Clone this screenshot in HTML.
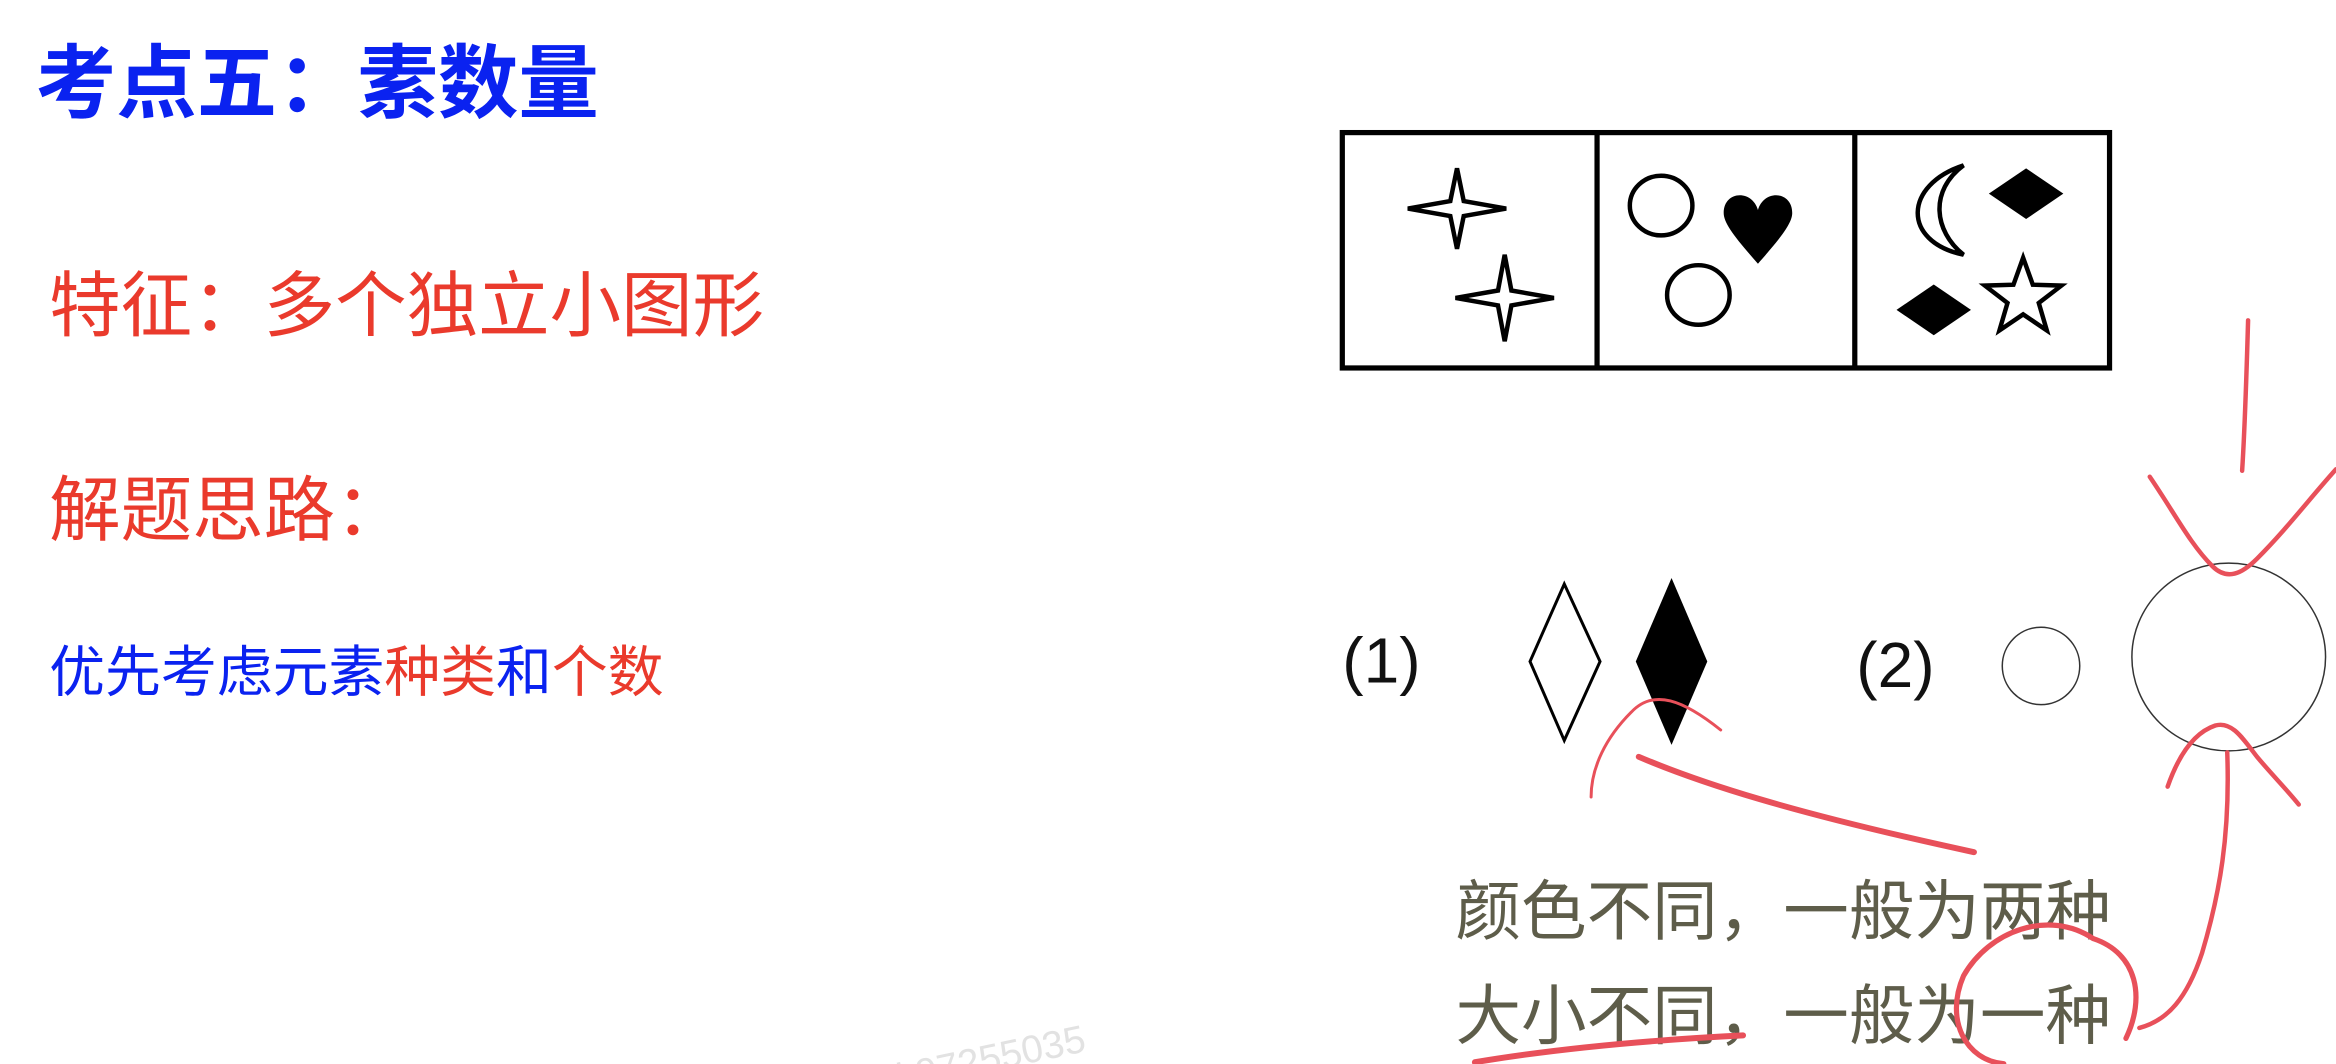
<!DOCTYPE html>
<html><head><meta charset="utf-8"><style>
html,body{margin:0;padding:0;background:#fff;overflow:hidden}
svg{display:block}
text{font-family:"Liberation Sans","Noto Sans CJK SC",sans-serif}
</style></head><body>
<svg width="2336" height="1064" viewBox="0 0 1568 714.2" xmlns="http://www.w3.org/2000/svg">
<rect width="1568" height="714.2" fill="#fff"/>
<text x="24" y="75" font-size="54" font-weight="bold" fill="#0a22f0" font-family="'Noto Sans CJK SC',sans-serif">考点五：素数量</text>
<text x="33" y="222" font-size="48" fill="#ea3a2c" font-family="'Noto Sans CJK SC',sans-serif">特征：多个独立小图形</text>
<text x="33" y="359" font-size="48" fill="#ea3a2c" font-family="'Noto Sans CJK SC',sans-serif">解题思路：</text>
<text x="33" y="464" font-size="37.5" font-family="'Noto Sans CJK SC',sans-serif"><tspan fill="#0a22f0">优先考虑元素</tspan><tspan fill="#ea3a2c">种类</tspan><tspan fill="#0a22f0">和</tspan><tspan fill="#ea3a2c">个数</tspan></text>

<g fill="none" stroke="#000" stroke-width="3.5">
<rect x="901" y="89" width="515" height="158"/>
<line x1="1072" y1="89" x2="1072" y2="247"/>
<line x1="1245" y1="89" x2="1245" y2="247"/>
</g>
<g fill="#fff" stroke="#000" stroke-width="3" stroke-linejoin="miter">
<path transform="translate(978,140)" d="M0,-27 L4.5,-5 L33,0 L4.5,5 L0,27 L-4.5,5 L-33,0 L-4.5,-5 Z"/>
<path transform="translate(1010,200)" d="M0,-29 L4.5,-5 L33,0 L4.5,5 L0,29 L-4.5,5 L-33,0 L-4.5,-5 Z"/>
<ellipse cx="1115" cy="138" rx="21" ry="20"/>
<ellipse cx="1140" cy="198" rx="21" ry="20"/>
<path d="M1318,111 C1278,124 1276,162 1318,171 C1298,155 1295,128 1318,111 Z"/>
<path transform="translate(1358,200)" d="M0,-27 L6.5,-8.9 L25.7,-8.3 L10.5,3.4 L15.9,21.8 L0,11 L-15.9,21.8 L-10.5,3.4 L-25.7,-8.3 L-6.5,-8.9 Z"/>
</g>
<path d="M1180,177 C1165,160 1157,150 1157,143 C1157,128 1176,127 1180,141 C1184,127 1203,128 1203,143 C1203,150 1195,160 1180,177Z" fill="#000"/>
<path d="M1360,113 L1385,130 L1360,147 L1335,130 Z" fill="#000"/>
<path d="M1298,191 L1323,208 L1298,225 L1273,208 Z" fill="#000"/>

<text x="901" y="458" font-size="43" fill="#111">(1)</text>
<path d="M1050,392 L1074,444 L1050,497 L1027,444 Z" fill="#fff" stroke="#000" stroke-width="2"/>
<path d="M1122,388 L1146,444 L1122,500 L1098,444 Z" fill="#000"/>
<text x="1246" y="461" font-size="43" fill="#111">(2)</text>
<circle cx="1370" cy="447" r="26" fill="none" stroke="#333" stroke-width="1"/>
<ellipse cx="1496" cy="441" rx="65" ry="63" fill="none" stroke="#333" stroke-width="1"/>

<text x="977" y="627" font-size="44" fill="#5e5d4a" font-family="'Noto Sans CJK SC',sans-serif">颜色不同，一般为两种</text>
<text x="977" y="697" font-size="44" fill="#5e5d4a" font-family="'Noto Sans CJK SC',sans-serif">大小不同，一般为一种</text>
<text x="585" y="722" font-size="26" fill="#e2e2e2" transform="rotate(-12 650 705)">id:97255035</text>

<g fill="none" stroke="#e8505a" stroke-linecap="round" stroke-linejoin="round">
<path d="M1509,215 C1508,250 1507,285 1505,316" stroke-width="3"/>
<path d="M1443,320 C1460,345 1470,365 1485,380 C1495,390 1505,385 1515,375 C1535,355 1550,335 1568,315" stroke-width="3"/>
<path d="M1455,528 C1462,508 1472,492 1487,487 C1498,484 1505,495 1515,508 C1525,520 1535,530 1543,540" stroke-width="3"/>
<path d="M1495,505 C1497,560 1490,600 1478,640 C1468,670 1455,685 1436,690" stroke-width="3"/>
<path d="M1405,630 C1375,610 1335,625 1318,655 C1305,685 1320,712 1345,714 M1427,697 C1440,670 1435,640 1405,630" stroke-width="3.5"/>
<path d="M1068,535 C1068,515 1078,495 1095,478 C1110,462 1130,470 1155,490" stroke-width="2"/>
<path d="M1100,508 C1140,525 1200,545 1325,572" stroke-width="4"/>
<path d="M990,713 C1050,703 1110,698 1170,695" stroke-width="4"/>
</g>
</svg>
</body></html>
